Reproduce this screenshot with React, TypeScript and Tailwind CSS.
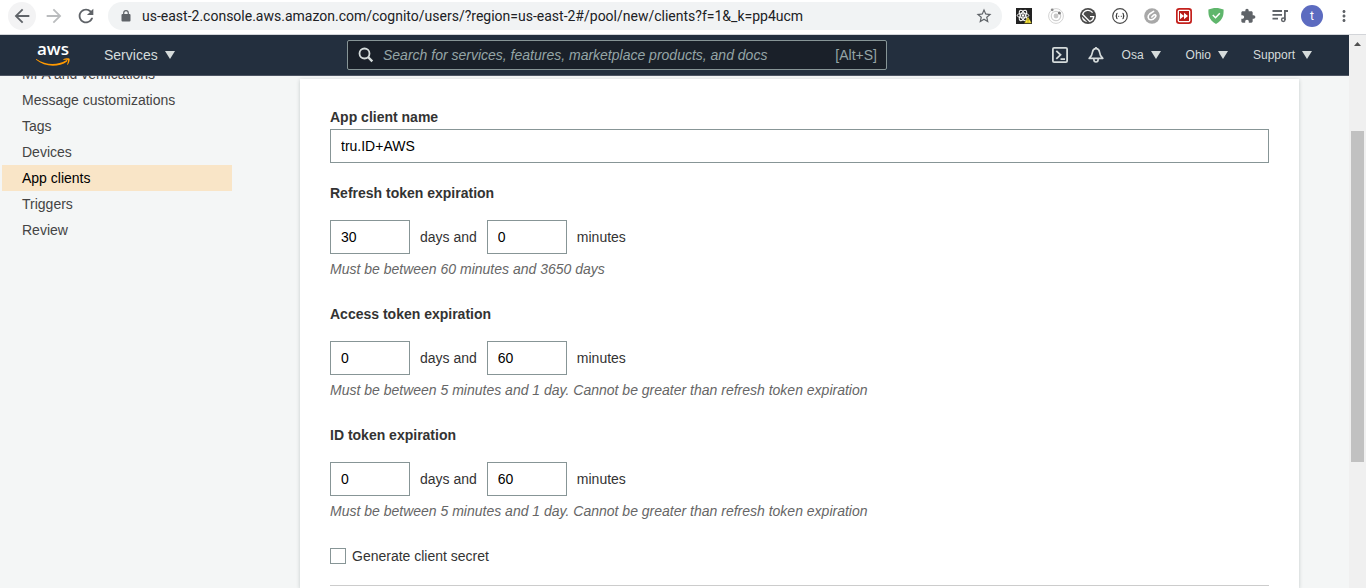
import React from "react";
import { MdArrowBack, MdArrowForward, MdMoreVert, MdRefresh, MdStarBorder } from "react-icons/md";

function ReactDevIcon() {
  return (
    <svg viewBox="0 0 16 16" className="h-4 w-4" aria-hidden="true">
      <rect width="16" height="16" fill="#222" />
      <g fill="none" stroke="#fff" strokeWidth="1">
        <ellipse cx="7" cy="7.5" rx="5.8" ry="2.4" />
        <ellipse cx="7" cy="7.5" rx="5.8" ry="2.4" transform="rotate(60 7 7.5)" />
        <ellipse cx="7" cy="7.5" rx="5.8" ry="2.4" transform="rotate(120 7 7.5)" />
      </g>
      <circle cx="7" cy="7.5" r="1.3" fill="#fff" />
      <path d="M12 8.6 15.8 15.2H8.2z" fill="#fde93a" stroke="#222" strokeWidth=".4" />
      <path d="M12 10.8v2M12 13.5v.8" stroke="#6b5d00" strokeWidth=".8" />
    </svg>
  );
}

function OrbitIcon() {
  return (
    <svg viewBox="0 0 16 16" className="h-4 w-4" aria-hidden="true">
      <circle cx="8" cy="8" r="7.4" fill="none" stroke="#d4d4d4" strokeWidth="1" />
      <circle cx="8" cy="8" r="4.7" fill="none" stroke="#d0d0d0" strokeWidth="1.2" />
      <circle cx="8" cy="8" r="2.4" fill="#c8c8c8" />
      <circle cx="4.2" cy="1.8" r="1.4" fill="#8a8a8a" />
      <circle cx="11.4" cy="5" r="1.5" fill="#7a7a7a" />
    </svg>
  );
}

function GatsbyIcon() {
  return (
    <svg viewBox="0 0 16 16" className="h-4 w-4" aria-hidden="true">
      <circle cx="8" cy="8" r="8" fill="#4a4a4a" />
      <path d="M1.8 8.6 7.4 14.2A6.2 6.2 0 0 1 1.8 8.6z" fill="#fff" />
      <path
        d="M12.6 4.6A5.7 5.7 0 0 0 2.6 6.3l7.1 7.1A5.7 5.7 0 0 0 13.7 8.6H10"
        fill="none"
        stroke="#fff"
        strokeWidth="1.3"
      />
    </svg>
  );
}

function BracesIcon() {
  return (
    <svg viewBox="0 0 16 16" className="h-4 w-4" aria-hidden="true">
      <circle cx="8" cy="8" r="7.3" fill="#fff" stroke="#4a4a4a" strokeWidth="1.2" />
      <path
        d="M5.6 5.2c-1.3 0-.9 1.2-1 2-.1.5-.5.8-1 .8.5 0 .9.2 1 .8.1.8-.3 2 1 2M10.4 5.2c1.3 0 .9 1.2 1 2 .1.5.5.8 1 .8-.5 0-.9.2-1 .8-.1.8.3 2-1 2"
        fill="none"
        stroke="#333"
        strokeWidth="1.1"
      />
      <path d="M6.2 8.3h1M8.8 8.3h1" stroke="#333" strokeWidth="1" />
    </svg>
  );
}

function ClipIcon() {
  return (
    <svg viewBox="0 0 16 16" className="h-4 w-4" aria-hidden="true">
      <circle cx="8" cy="8" r="7.8" fill="#a8a8a8" />
      <path
        d="M9.6 3.4 5.6 6C3.2 8 3.8 11.5 6.8 11.8c1.8.2 3-.8 4.200-2.200 1-1.200 1.200-2 .6-2.600-.7-.7-1.500-.3-2.200.4L7.800 9"
        fill="none"
        stroke="#fff"
        strokeWidth="1.6"
        strokeLinecap="round"
      />
    </svg>
  );
}

function FastForwardIcon() {
  return (
    <svg viewBox="0 0 16 16" className="h-4 w-4" aria-hidden="true">
      <rect width="16" height="16" rx="3.2" fill="#c4211d" />
      <rect x="1.7" y="1.7" width="12.6" height="12.6" rx="1.8" fill="#fff" />
      <rect x="3" y="3" width="10" height="10" fill="#b81c18" />
      <path d="M4 4.8 8 8l-4 3.2zM8 4.8 12 8l-4 3.2z" fill="#fff" />
    </svg>
  );
}

function ShieldIcon() {
  return (
    <svg viewBox="0 0 16 16" className="h-4 w-4" aria-hidden="true">
      <path d="M8 0c2.500 0 5.300.6 7.600 1.600C15.600 6.200 15.900 11.500 8 16 .1 11.500.4 6.200.4 1.600 2.700.6 5.500 0 8 0z" fill="#5fb66c" />
      <path d="m4.800 7 2.700 2.700 4.300-4.500" fill="none" stroke="#fff" strokeWidth="1.5" />
    </svg>
  );
}

function PuzzleIcon() {
  return (
    <svg viewBox="0 0 24 24" className="size-4" fill="currentColor" aria-hidden="true">
      <path d="M20.5 11H19V7c0-1.100-.9-2-2-2h-4V3.500C13 2.120 11.880 1 10.500 1S8 2.120 8 3.500V5H4c-1.100 0-1.990.9-1.990 2v3.800H3.500c1.490 0 2.700 1.210 2.700 2.700s-1.210 2.700-2.700 2.700H2V20c0 1.100.9 2 2 2h3.800v-1.500c0-1.490 1.210-2.700 2.700-2.700 1.490 0 2.700 1.210 2.700 2.700V22H17c1.100 0 2-.9 2-2v-4h1.500c1.380 0 2.500-1.120 2.500-2.500S21.880 11 20.500 11z" />
    </svg>
  );
}

function MediaIcon() {
  return (
    <svg viewBox="0 0 16 16" className="size-4" aria-hidden="true">
      <path d="M.5 3h9.500M.5 6.800h9.500M.5 10.600h5.500" stroke="currentColor" strokeWidth="1.8" />
      <path d="M12.900 12V3H16" fill="none" stroke="currentColor" strokeWidth="1.8" />
      <circle cx="11.300" cy="11.800" r="1.700" fill="none" stroke="currentColor" strokeWidth="1.5" />
    </svg>
  );
}

function LockIcon() {
  return (
    <svg viewBox="0 0 10 12" className="h-3 w-2.5 shrink-0" aria-hidden="true">
      <rect x=".5" y="4" width="9" height="7.5" rx="1" fill="#5f6368" />
      <path d="M2.700 4.500V3a2.300 2.300 0 0 1 4.600 0v1.500" fill="none" stroke="#5f6368" strokeWidth="1.2" />
    </svg>
  );
}

function Caret() {
  return (
    <svg viewBox="0 0 10 8" className="h-2 w-2.5" aria-hidden="true">
      <path d="M0 0h10L5 8z" fill="#d5dbdb" />
    </svg>
  );
}

const extensions = [
  { label: "React tools", icon: <ReactDevIcon /> },
  { label: "Orbit", icon: <OrbitIcon /> },
  { label: "Gatsby", icon: <GatsbyIcon /> },
  { label: "JSON viewer", icon: <BracesIcon /> },
  { label: "Clip", icon: <ClipIcon /> },
  { label: "Fast forward", icon: <FastForwardIcon /> },
  { label: "Shield", icon: <ShieldIcon /> },
  { label: "Extensions", icon: <PuzzleIcon /> },
  { label: "Media", icon: <MediaIcon /> },
];

function BrowserBar() {
  return (
    <div className="flex h-[35px] shrink-0 items-start border-b border-[#d3d5d9] bg-white pt-0.5 pr-1.5 pl-2 text-[#5f6368]">
      <div className="flex gap-1">
        <button aria-label="Back" className="flex size-7 items-center justify-center rounded-full bg-[#f3f3f4]">
          <MdArrowBack size={22} />
        </button>
        <button aria-label="Forward" className="flex size-7 items-center justify-center text-[#babcbe]">
          <MdArrowForward size={22} />
        </button>
        <button aria-label="Reload" className="flex size-7 items-center justify-center">
          <MdRefresh size={22} />
        </button>
      </div>
      <div className="ml-2 flex h-7 min-w-0 flex-1 items-center rounded-full bg-[#f1f3f4] pr-[9px] pl-[13px]">
        <LockIcon />
        <input
          aria-label="Address"
          className="ml-[11px] min-w-0 flex-1 bg-transparent font-['Roboto',sans-serif] text-sm text-[#202124] outline-none"
          defaultValue="us-east-2.console.aws.amazon.com/cognito/users/?region=us-east-2#/pool/new/clients?f=1&_k=pp4ucm"
        />
        <button aria-label="Bookmark">
          <MdStarBorder size={18} />
        </button>
      </div>
      <div className="ml-1.5 flex shrink-0">
        {extensions.map((e) => (
          <button key={e.label} aria-label={e.label} className="flex h-7 w-8 items-center justify-center">
            {e.icon}
          </button>
        ))}
        <button className="flex h-7 w-8 items-center justify-center">
          <span className="flex size-[22px] items-center justify-center rounded-full bg-[#5c6bc0] font-['Roboto',sans-serif] text-xs text-white">
            t
          </span>
        </button>
        <button aria-label="More" className="flex h-7 w-8 items-center justify-center">
          <MdMoreVert size={18} />
        </button>
      </div>
    </div>
  );
}

function ConsoleHeader() {
  return (
    <header className="flex h-[41px] shrink-0 items-center border-b border-[#4d5563] bg-[#232f3e] pr-[37px] text-[#d5dbdb]">
      <div className="flex w-[347px] shrink-0 items-center pl-9">
        <a href="#home" className="flex w-[34px] flex-col items-center">
          <span className="h-3.5 font-['Open_Sans',sans-serif] text-[17px] leading-[10px] font-semibold text-white">
            aws
          </span>
          <svg viewBox="0 0 34 8" className="h-2 w-[34px]" aria-hidden="true">
            <path
              d="M.4 1c9.200 6.200 20.800 6.600 29.800 1.200 1-.5 1.700.5.900 1.200C22.600 9.600 8.500 9.200.1 1.800-.3 1.300 0 .8.4 1z"
              fill="#f90"
            />
            <path
              d="M27.400 1.200C29 .1 32.800-.1 33.500.7c.6.9-.3 4.700-2 6.100-.3.200-.6 0-.4-.4.5-1.300 1.200-3.500.8-4.100-.5-.6-2.800-.5-4.200-.3-.5 0-.6-.5-.3-.8z"
              fill="#f90"
            />
          </svg>
        </a>
        <button className="ml-[34px] flex items-center gap-[7px] text-sm">
          Services <Caret />
        </button>
      </div>
      <label className="flex h-[30px] max-w-[540px] min-w-0 flex-1 items-center rounded-xs border border-[#879596] bg-[#1a2029] pr-[9px] pl-2.5 text-sm text-[#95a5a6]">
        <svg viewBox="0 0 16 16" className="size-4 shrink-0" aria-hidden="true">
          <circle cx="6.5" cy="6.5" r="5" fill="none" stroke="#d5dbdb" strokeWidth="1.8" />
          <path d="m10 10 4.300 4.300" stroke="#d5dbdb" strokeWidth="2.4" />
        </svg>
        <input
          aria-label="Search"
          type="text"
          placeholder="Search for services, features, marketplace products, and docs"
          className="ml-[9px] min-w-0 flex-1 bg-transparent italic outline-none placeholder:text-[#95a5a6]"
        />
        <span>[Alt+S]</span>
      </label>
      <div className="ml-auto flex shrink-0 items-center text-xs">
        <button aria-label="CloudShell" className="mr-5">
          <svg viewBox="0 0 16 16" className="size-4" fill="none" stroke="#d5dbdb" strokeWidth="1.8">
            <rect x=".9" y=".9" width="14.2" height="14.2" rx="1.2" />
            <path d="m4.300 3.800 4.200 4-4.200 4M8.500 12.200H13" />
          </svg>
        </button>
        <button aria-label="Notifications" className="mr-[18px]">
          <svg viewBox="0 0 16 16" className="size-4" fill="none" stroke="#d5dbdb" strokeWidth="1.7">
            <path
              d="M8 1.300c-2 .3-3.300 1.700-3.500 3.700C4.300 7.600 3.300 9.300 1.200 11.300h13.600c-2.100-2-3.100-3.700-3.300-6.300C11.300 3 10 1.600 8 1.300z"
              strokeLinejoin="round"
            />
            <path d="M5.900 11.800v1c0 1.300.9 2.200 2.100 2.200s2.100-.9 2.100-2.200v-1" />
            <path d="M8 0v1.500" />
          </svg>
        </button>
        <div className="flex items-center gap-[25px]">
          {["Osa", "Ohio", "Support"].map((t) => (
            <button key={t} className="flex items-center gap-[7px]">
              {t} <Caret />
            </button>
          ))}
        </div>
      </div>
    </header>
  );
}

const steps = [
  "MFA and verifications",
  "Message customizations",
  "Tags",
  "Devices",
  "App clients",
  "Triggers",
  "Review",
];

function Sidebar() {
  return (
    <nav className="w-[300px] shrink-0 overflow-hidden pl-0.5">
      <ul className="-mt-[15px] w-[230px]">
        {steps.map((s) => (
          <li key={s}>
            <a
              href="#step"
              className={
                s === "App clients"
                  ? "block bg-[#f9e5c7] pl-5 leading-[26px] text-black"
                  : "block pl-5 leading-[26px] text-[#444]"
              }
            >
              {s}
            </a>
          </li>
        ))}
      </ul>
    </nav>
  );
}

interface ExpirationProps {
  title: string;
  days: string;
  minutes: string;
  hint: string;
}

function Expiration({ title, days, minutes, hint }: ExpirationProps) {
  const box = "h-[34px] w-20 border border-[#879596] bg-white px-2.5 text-black outline-none";
  return (
    <fieldset className="mb-[25px]">
      <legend className="font-bold">{title}</legend>
      <div className="mt-[17px] flex items-center gap-2.5">
        <input aria-label={title + " days"} className={box} defaultValue={days} />
        <span>days and</span>
        <input aria-label={title + " minutes"} className={box} defaultValue={minutes} />
        <span>minutes</span>
      </div>
      <p className="mt-[5px] text-[#666] italic">{hint}</p>
    </fieldset>
  );
}

function ClientForm() {
  return (
    <form className="min-h-full bg-white px-[30px] pt-7 shadow-[0_1px_4px_rgba(0,28,36,0.2)]">
      <label htmlFor="client-name" className="block font-bold">
        App client name
      </label>
      <input
        id="client-name"
        className="mt-0.5 mb-5 block h-[34px] w-full border border-[#879596] bg-white px-2.5 text-black outline-none"
        defaultValue="tru.ID+AWS"
      />
      <Expiration
        title="Refresh token expiration"
        days="30"
        minutes="0"
        hint="Must be between 60 minutes and 3650 days"
      />
      <Expiration
        title="Access token expiration"
        days="0"
        minutes="60"
        hint="Must be between 5 minutes and 1 day. Cannot be greater than refresh token expiration"
      />
      <Expiration
        title="ID token expiration"
        days="0"
        minutes="60"
        hint="Must be between 5 minutes and 1 day. Cannot be greater than refresh token expiration"
      />
      <label className="flex items-center gap-1.5">
        <input type="checkbox" className="size-4 appearance-none border border-[#879596] bg-white checked:bg-[#0073bb]" />
        Generate client secret
      </label>
      <hr className="mt-[19px] border-[#ccc]" />
    </form>
  );
}

function ScrollTrack() {
  return (
    <div className="flex w-[17px] shrink-0 flex-col items-center bg-[#f0f0f0]" aria-hidden="true">
      <svg viewBox="0 0 17 17" className="size-[17px] shrink-0">
        <path d="M5 11h7L8.500 7z" fill="#505050" />
      </svg>
      <div className="flex-[79]" />
      <div className="w-[13px] flex-[331] bg-[#c1c1c1]" />
      <div className="flex-[126]" />
    </div>
  );
}

export default function App() {
  return (
    <div className="flex h-screen flex-col overflow-hidden font-['Liberation_Sans',Arial,sans-serif] text-sm text-[#333]">
      <BrowserBar />
      <div className="flex min-h-0 flex-1">
        <div className="flex min-w-0 flex-1 flex-col">
          <ConsoleHeader />
          <div className="flex min-h-0 flex-1 overflow-hidden bg-[#f4f6f6]">
            <Sidebar />
            <main className="mr-[50px] min-w-0 flex-1 pt-[3px]">
              <ClientForm />
            </main>
          </div>
        </div>
        <ScrollTrack />
      </div>
    </div>
  );
}
